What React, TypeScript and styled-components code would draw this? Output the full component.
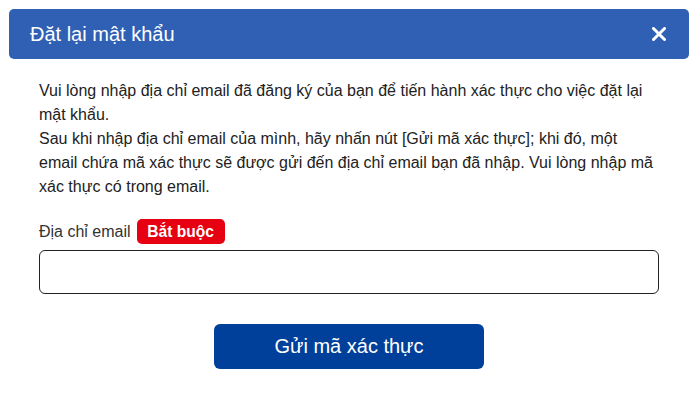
import React, { useState } from 'react';
import styled, { createGlobalStyle } from 'styled-components';

const GlobalStyle = createGlobalStyle`
    html, body {
        margin: 0;
        padding: 0;
        background: #ffffff;
        font-family: 'Liberation Sans', Arial, sans-serif;
        color: #222222;
    }
`;

const Page = styled.div`
    padding: 9px 8px 9px 9px;
`;

const Modal = styled.div`
    width: 680px;
    background: #ffffff;
`;

const Header = styled.div`
    height: 50px;
    background: #3060b4;
    border-radius: 5px;
    padding: 0 23px 0 21px;
    display: flex;
    align-items: center;
    justify-content: space-between;
`;

const Title = styled.h2`
    margin: 0;
    font-size: 20px;
    font-weight: normal;
    color: #ffffff;
`;

const CloseButton = styled.button`
    background: none;
    border: none;
    padding: 0;
    width: 14px;
    height: 14px;
    display: flex;
    cursor: pointer;
`;

const Body = styled.div`
    padding: 20px 30px 0 30px;
`;

const Description = styled.p`
    margin: 0 0 20px 0;
    font-size: 16px;
    line-height: 24px;
    color: #222222;
`;

const LabelRow = styled.div`
    display: flex;
    align-items: center;
    gap: 6px;
    height: 25px;
    margin-bottom: 6px;
`;

const Label = styled.label`
    font-size: 16px;
    color: #333333;
`;

const Badge = styled.span`
    box-sizing: border-box;
    display: inline-flex;
    align-items: center;
    justify-content: center;
    height: 25px;
    width: 88px;
    background: #e60012;
    color: #ffffff;
    font-size: 15.6px;
    font-weight: bold;
    border-radius: 5px;
`;

const EmailInput = styled.input`
    box-sizing: border-box;
    width: 620px;
    height: 44px;
    border: 1px solid #222222;
    border-radius: 6px;
    padding: 0 12px;
    font-size: 15px;
    font-family: inherit;
    outline: none;
`;

const Actions = styled.div`
    display: flex;
    justify-content: center;
    padding-top: 30px;
    padding-bottom: 30px;
`;

const SubmitButton = styled.button`
    width: 270px;
    height: 45px;
    background: #00409a;
    color: #ffffff;
    border: none;
    border-radius: 6px;
    font-size: 20px;
    font-family: inherit;
    cursor: pointer;
`;

export default function App() {
    const [email, setEmail] = useState('');

    return (
        <>
            <GlobalStyle />
            <Page>
                <Modal>
                    <Header>
                        <Title>Đặt lại mật khẩu</Title>
                        <CloseButton aria-label="Đóng">
                            <svg width="14" height="14" viewBox="0 0 14 14">
                                <path d="M1.5 1.5 L12.5 12.5 M12.5 1.5 L1.5 12.5" stroke="#ffffff" strokeWidth="3" strokeLinecap="round" />
                            </svg>
                        </CloseButton>
                    </Header>
                    <Body>
                        <Description>
                            Vui lòng nhập địa chỉ email đã đăng ký của bạn để tiến hành xác thực cho việc đặt lại mật khẩu.
                            <br />
                            Sau khi nhập địa chỉ email của mình, hãy nhấn nút [Gửi mã xác thực]; khi đó, một email chứa mã xác thực sẽ được gửi đến địa chỉ email bạn đã nhập. Vui lòng nhập mã xác thực có trong email.
                        </Description>
                        <LabelRow>
                            <Label htmlFor="email">Địa chỉ email</Label>
                            <Badge>Bắt buộc</Badge>
                        </LabelRow>
                        <EmailInput id="email" type="email" value={email} onChange={(e) => setEmail(e.target.value)} />
                        <Actions>
                            <SubmitButton>Gửi mã xác thực</SubmitButton>
                        </Actions>
                    </Body>
                </Modal>
            </Page>
        </>
    );
}
